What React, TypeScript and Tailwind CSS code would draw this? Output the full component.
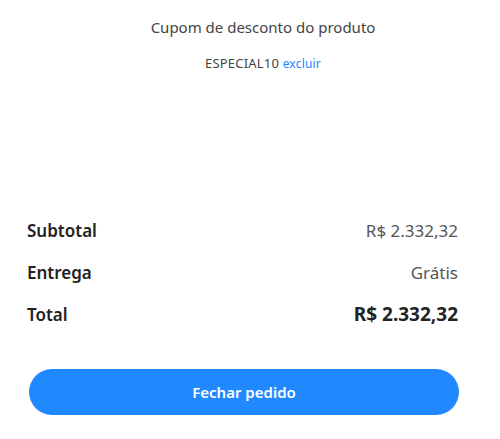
export default function App() {
  return (
    <div
      className="w-[500px] h-[439px] bg-white flex flex-col"
      style={{ fontFamily: '"Noto Sans", "Open Sans", sans-serif' }}
    >
      <div className="pt-[15px] pl-[26px] flex flex-col items-center">
        <p className="text-[15px] leading-[24px] text-[#444]">Cupom de desconto do produto</p>
        <p className="mt-[16px] text-[13px] leading-[16px] text-[#444] tracking-[0.2px]">
          ESPECIAL10 <span className="text-[#2189ff] text-[12px]">excluir</span>
        </p>
      </div>

      <div className="mt-[146px] pl-[27px] pr-[42px] flex flex-col">
        <div className="flex justify-between items-baseline h-[42px]">
          <span className="text-[17px] font-semibold text-[#222]">Subtotal</span>
          <span className="text-[17px] text-[#555]">R$ 2.332,32</span>
        </div>
        <div className="flex justify-between items-baseline h-[40px]">
          <span className="text-[17px] font-semibold text-[#222]">Entrega</span>
          <span className="text-[17px] text-[#555]">Grátis</span>
        </div>
        <div className="flex justify-between items-baseline h-[42px]">
          <span className="text-[17px] font-semibold text-[#222]">Total</span>
          <span className="text-[19px] font-bold text-[#222]">R$ 2.332,32</span>
        </div>
      </div>

      <div className="pl-[29px] mt-[27px]">
        <button className="w-[430px] h-[46px] rounded-full bg-[#2189ff] text-white text-[15px] font-semibold">
          Fechar pedido
        </button>
      </div>
    </div>
  );
}
